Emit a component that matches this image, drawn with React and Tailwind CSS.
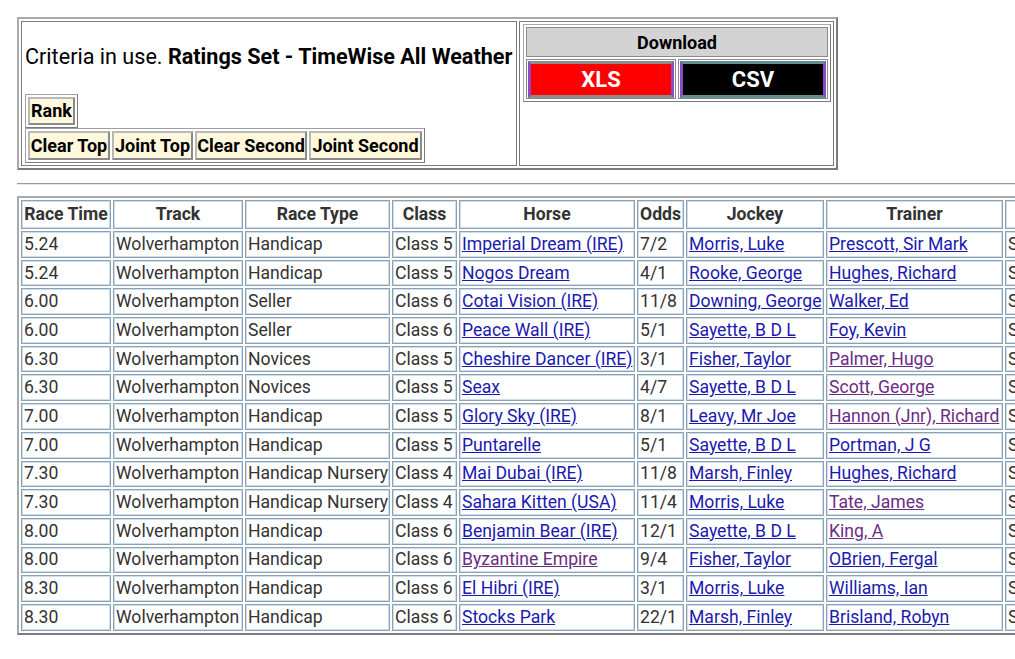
import React from "react";

const rows = [
  ["5.24", "Wolverhampton", "Handicap", "Class 5", ["Imperial Dream (IRE)", 0], "7/2", ["Morris, Luke", 0], ["Prescott, Sir Mark", 0]],
  ["5.24", "Wolverhampton", "Handicap", "Class 5", ["Nogos Dream", 0], "4/1", ["Rooke, George", 0], ["Hughes, Richard", 0]],
  ["6.00", "Wolverhampton", "Seller", "Class 6", ["Cotai Vision (IRE)", 0], "11/8", ["Downing, George", 0], ["Walker, Ed", 0]],
  ["6.00", "Wolverhampton", "Seller", "Class 6", ["Peace Wall (IRE)", 0], "5/1", ["Sayette, B D L", 0], ["Foy, Kevin", 0]],
  ["6.30", "Wolverhampton", "Novices", "Class 5", ["Cheshire Dancer (IRE)", 0], "3/1", ["Fisher, Taylor", 0], ["Palmer, Hugo", 1]],
  ["6.30", "Wolverhampton", "Novices", "Class 5", ["Seax", 0], "4/7", ["Sayette, B D L", 0], ["Scott, George", 1]],
  ["7.00", "Wolverhampton", "Handicap", "Class 5", ["Glory Sky (IRE)", 0], "8/1", ["Leavy, Mr Joe", 0], ["Hannon (Jnr), Richard", 1]],
  ["7.00", "Wolverhampton", "Handicap", "Class 5", ["Puntarelle", 0], "5/1", ["Sayette, B D L", 0], ["Portman, J G", 0]],
  ["7.30", "Wolverhampton", "Handicap Nursery", "Class 4", ["Mai Dubai (IRE)", 0], "11/8", ["Marsh, Finley", 0], ["Hughes, Richard", 0]],
  ["7.30", "Wolverhampton", "Handicap Nursery", "Class 4", ["Sahara Kitten (USA)", 0], "11/4", ["Morris, Luke", 0], ["Tate, James", 1]],
  ["8.00", "Wolverhampton", "Handicap", "Class 6", ["Benjamin Bear (IRE)", 0], "12/1", ["Sayette, B D L", 0], ["King, A", 1]],
  ["8.00", "Wolverhampton", "Handicap", "Class 6", ["Byzantine Empire", 1], "9/4", ["Fisher, Taylor", 0], ["OBrien, Fergal", 0]],
  ["8.30", "Wolverhampton", "Handicap", "Class 6", ["El Hibri (IRE)", 0], "3/1", ["Morris, Luke", 0], ["Williams, Ian", 0]],
  ["8.30", "Wolverhampton", "Handicap", "Class 6", ["Stocks Park", 0], "22/1", ["Marsh, Finley", 0], ["Brisland, Robyn", 0]],
];

const headers = [
  ["Race Time", "w-[90px]"],
  ["Track", "w-[130px]"],
  ["Race Type", "w-[145px]"],
  ["Class", "w-[65px]"],
  ["Horse", "w-[176px]"],
  ["Odds", "w-[47px]"],
  ["Jockey", "w-[138px]"],
  ["Trainer", "w-[177px]"],
  ["Status", "w-[160px]"],
];

const cellCls =
  "border border-[#8fa0ae] shadow-[inset_0_0_0_1px_#c9def0] px-[2px] py-0 h-[26.7px] leading-[21px] whitespace-nowrap overflow-hidden align-middle";

function Link({ item }) {
  const [text, visited] = item;
  return (
    <a
      href="#"
      className={
        "underline " + (visited ? "text-[#6a2c85]" : "text-[#1b19b0]")
      }
    >
      {text}
    </a>
  );
}

function CreamButton({ children, w }) {
  return (
    <div
      className={
        "h-[29px] flex items-center justify-center bg-[#fff8dc] border-2 border-[#8a8a8a] border-t-[#b8b8b8] border-l-[#b8b8b8] text-black font-bold text-[18px] leading-none " +
        w
      }
    >
      {children}
    </div>
  );
}

export default function App() {
  return (
    <div className="w-[1015px] h-[659px] overflow-hidden bg-white font-['Roboto',sans-serif] text-[#333]">
      <div className="pl-[17px] pt-[17px] w-[1400px]">
        {/* Top table */}
        <div className="inline-flex gap-[2px] p-[2px] border-2 border-[#7c7c7c] border-t-[#a9a9a9] border-l-[#a9a9a9]">
          <div className="w-[496px] h-[145px] border border-[#7a7a7a] px-[3px] pt-[23px]">
            <p className="text-[21.6px] leading-[24px] text-black whitespace-nowrap">
              Criteria in use. <b>Ratings Set - TimeWise All Weather</b>
            </p>
            <div className="mt-[25px] inline-flex p-[2px] border border-[#a0a0a0] border-b-[#7a7a7a] border-r-[#7a7a7a]">
              <CreamButton w="w-[47px] !h-[28px]">Rank</CreamButton>
            </div>
            <div className="flex">
              <div className="inline-flex gap-[2px] p-[2px] border border-[#a0a0a0] border-b-[#7a7a7a] border-r-[#7a7a7a]">
                <CreamButton w="w-[82px]">Clear Top</CreamButton>
                <CreamButton w="w-[81px]">Joint Top</CreamButton>
                <CreamButton w="w-[112px]">Clear Second</CreamButton>
                <CreamButton w="w-[113px]">Joint Second</CreamButton>
              </div>
            </div>
          </div>
          <div className="w-[315px] h-[145px] border border-[#7a7a7a] pt-[2px] pl-[3px]">
            <div className="w-[308px] border border-[#7a7a7a] border-t-[#a8a8a8] border-l-[#a8a8a8] p-[2px] flex flex-col gap-[2px]">
              <div className="h-[30px] bg-[#d3d3d3] border border-[#8a8a8a] flex items-center justify-center font-bold text-[18px] text-black">
                Download
              </div>
              <div className="flex gap-[2px]">
                <div className="w-[150px] h-[40px] border border-[#8a8a8a] p-[1px] flex items-center">
                  <div className="w-full h-[37px] bg-[#ff0000] border-[3px] border-[#8c8c8c] border-l-[#8a4bc9] border-r-[#8a4bc9] flex items-center justify-center text-white font-bold text-[22px]">
                    XLS
                  </div>
                </div>
                <div className="w-[150px] h-[40px] border border-[#8a8a8a] p-[1px] flex items-center">
                  <div className="w-full h-[37px] bg-black border-[3px] border-[#5f8f8f] border-l-[#8a4bc9] border-r-[#8a4bc9] flex items-center justify-center text-white font-bold text-[22px]">
                    CSV
                  </div>
                </div>
              </div>
            </div>
          </div>
        </div>

        {/* hr */}
        <div className="mt-[13px] h-[2px] border-t border-[#9a9a9a] border-b border-b-[#e6e6e6]" />

        {/* Main table */}
        <table className="mt-[11px] w-[1152px] table-fixed border-separate border-spacing-[2px] border-2 border-[#7c7c7c] border-t-[#a9a9a9] border-l-[#a9a9a9] text-[17.6px] text-[#333]">
          <thead>
            <tr>
              {headers.map(([h, w]) => (
                <th key={h} className={cellCls + " font-bold text-center !h-[29px] " + w}>
                  {h}
                </th>
              ))}
            </tr>
          </thead>
          <tbody>
            {rows.map((r, i) => (
              <tr key={i}>
                <td className={cellCls}>{r[0]}</td>
                <td className={cellCls}>{r[1]}</td>
                <td className={cellCls}>{r[2]}</td>
                <td className={cellCls}>{r[3]}</td>
                <td className={cellCls}>
                  <Link item={r[4]} />
                </td>
                <td className={cellCls}>{r[5]}</td>
                <td className={cellCls}>
                  <Link item={r[6]} />
                </td>
                <td className={cellCls}>
                  <Link item={r[7]} />
                </td>
                <td className={cellCls}>Standard</td>
              </tr>
            ))}
          </tbody>
        </table>
      </div>
    </div>
  );
}
